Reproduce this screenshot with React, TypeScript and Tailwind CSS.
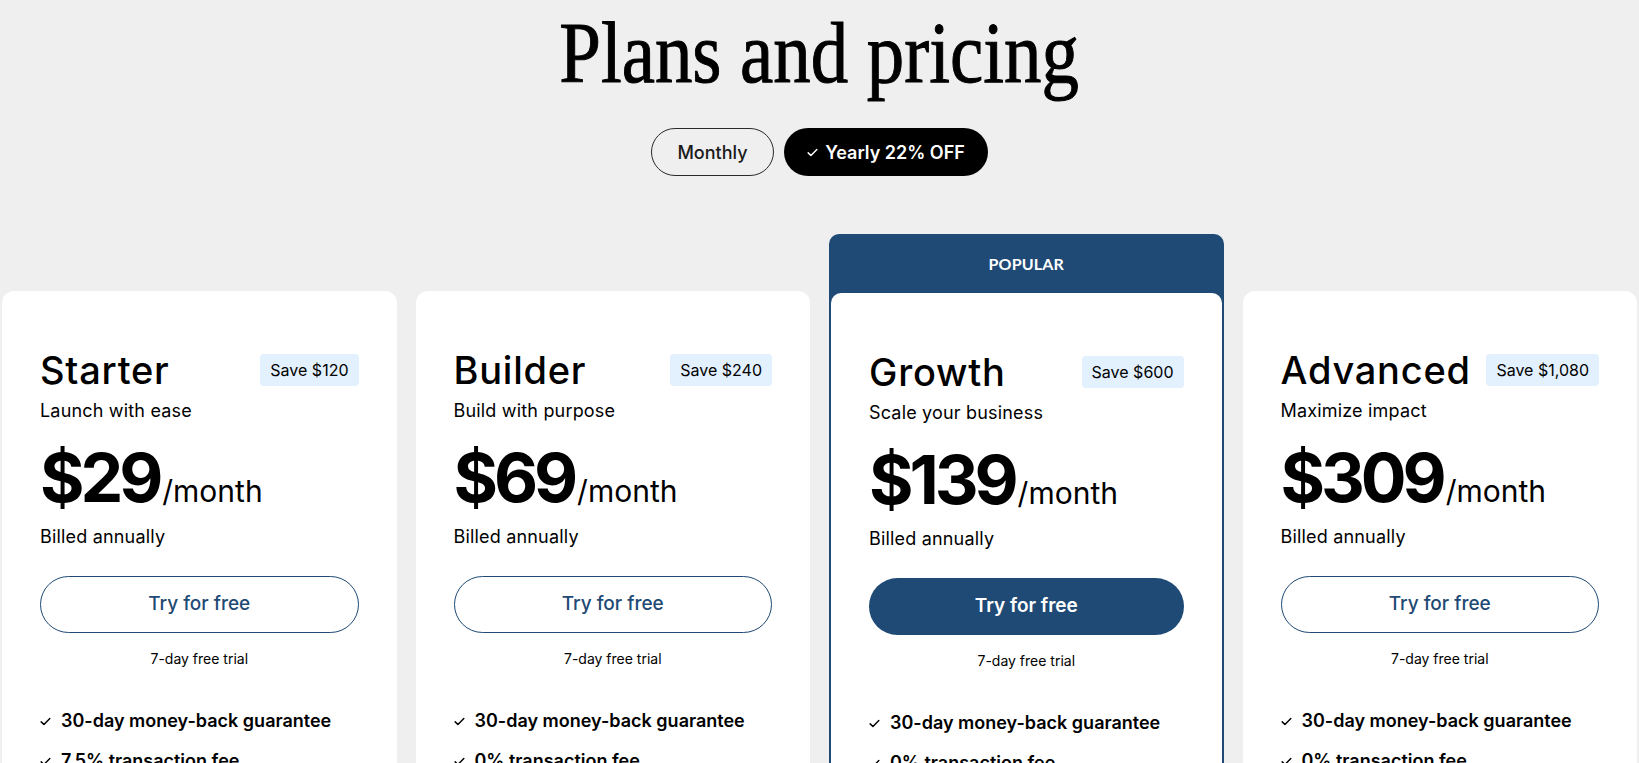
const plans = [
  {
    name: 'Starter',
    save: 'Save $120',
    tagline: 'Launch with ease',
    price: '$29',
    fee: '7.5% transaction fee',
  },
  {
    name: 'Builder',
    save: 'Save $240',
    tagline: 'Build with purpose',
    price: '$69',
    fee: '0% transaction fee',
  },
  {
    name: 'Growth',
    save: 'Save $600',
    tagline: 'Scale your business',
    price: '$139',
    fee: '0% transaction fee',
    popular: true,
  },
  {
    name: 'Advanced',
    save: 'Save $1,080',
    tagline: 'Maximize impact',
    price: '$309',
    fee: '0% transaction fee',
  },
]

function Check({ className = '' }: { className?: string }) {
  return (
    <svg viewBox="0 0 12 10" className={className} fill="none" stroke="currentColor" strokeWidth="1.6" strokeLinecap="round" strokeLinejoin="round">
      <path d="M1.2 5.4 L4.3 8.4 L10.8 1.6" />
    </svg>
  )
}

type Plan = (typeof plans)[number]

function PlanBody({ plan }: { plan: Plan }) {
  return (
    <div className="px-[38px] pt-[60px]">
      <div className="flex items-center justify-between">
        <h2 className="text-[38px] leading-none font-medium tracking-[0.02em]">{plan.name}</h2>
        <span className="h-8 px-[10px] rounded-[4px] bg-[#e3f0fd] text-[16px] leading-8">{plan.save}</span>
      </div>
      <p className="mt-[10px] text-[18px] leading-6 tracking-[0.01em]">{plan.tagline}</p>
      <div className="mt-[20px] flex items-baseline">
        <span className="text-[68px] leading-none font-bold tracking-[-0.06em]">{plan.price}</span>
        <span className="ml-[3px] text-[30px] leading-none">/month</span>
      </div>
      <p className="mt-[14px] text-[18px] leading-6 tracking-[0.01em]">Billed annually</p>
      {plan.popular ? (
        <button className="mt-[27px] w-full h-[57px] rounded-full bg-[#1f4a75] text-white text-[19px] font-semibold">
          Try for free
        </button>
      ) : (
        <button className="mt-[27px] w-full h-[57px] rounded-full border border-[#1f4a75] text-[#1f4a75] text-[19px] font-medium">
          Try for free
        </button>
      )}
      <p className="mt-[16px] text-center text-[14px] leading-5">7-day free trial</p>
      <ul className="mt-[40px] flex flex-col gap-4">
        {['30-day money-back guarantee', plan.fee].map((f) => (
          <li key={f} className="flex items-center gap-[10px] text-[18px] leading-6 font-semibold">
            <Check className="w-[11px] h-[9px] shrink-0" />
            {f}
          </li>
        ))}
      </ul>
    </div>
  )
}

export default function App() {
  return (
    <div className="h-[763px] overflow-hidden bg-[#efefef] text-black font-['Inter',sans-serif]">
      <h1 className="pt-[9px] text-center font-['Liberation_Serif',serif] text-[87px] leading-none [-webkit-text-stroke:1px_#000]">
        <span className="inline-block scale-x-[0.86]">Plans and pricing</span>
      </h1>

      <div className="mt-[32px] flex justify-center gap-[10px]">
        <button className="w-[123px] h-12 rounded-full border border-[#2a2a2a] text-[18px] font-medium text-[#1a1a1a]">
          Monthly
        </button>
        <button className="w-[204px] h-12 rounded-full bg-black text-white text-[18px] font-semibold flex items-center justify-center gap-[7px]">
          <Check className="w-[11px] h-[9px]" />
          Yearly 22% OFF
        </button>
      </div>

      <div className="mt-[58px] px-[2px] grid grid-cols-4 gap-[19px] items-start">
        {plans.map((plan) =>
          plan.popular ? (
            <div key={plan.name} className="rounded-t-[10px] bg-[#1f4a75] px-[2px]">
              <div className="h-[59px] flex items-center justify-center text-white font-['Lato',sans-serif] font-bold text-[16px] tracking-[0.01em]">
                POPULAR
              </div>
              <div className="bg-white rounded-t-[10px] h-[600px]">
                <PlanBody plan={plan} />
              </div>
            </div>
          ) : (
            <div key={plan.name} className="mt-[57px] bg-white rounded-xl h-[600px]">
              <PlanBody plan={plan} />
            </div>
          )
        )}
      </div>
    </div>
  )
}
